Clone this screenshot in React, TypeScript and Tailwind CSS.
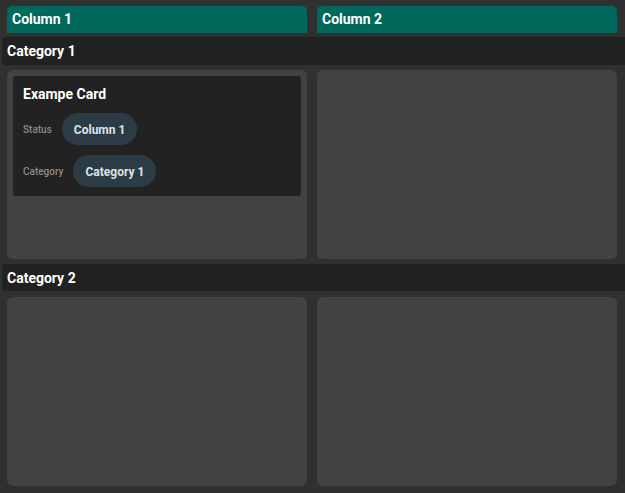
export default function App() {
    const columns = ["Column 1", "Column 2"];

    return (
        <div className="min-h-screen bg-[#303030] pt-[6px] font-['Roboto',sans-serif]">
            {/* Column headers */}
            <div className="flex gap-[10px] pl-[7px]">
                {columns.map((c) => (
                    <div
                        key={c}
                        className="w-[300px] h-[27px] rounded-t-[5px] bg-[#00695c] pl-[5px] flex items-center text-[14px] font-bold text-white"
                    >
                        {c}
                    </div>
                ))}
            </div>

            {/* Category 1 */}
            <div className="mt-[4px] ml-[2px] h-[28px] rounded-l-[4px] bg-[#212121] pl-[5px] flex items-center text-[14px] font-bold text-white">
                Category 1
            </div>
            <div className="mt-[5px] flex gap-[10px] pl-[7px]">
                <div className="w-[300px] h-[189px] rounded-[6px] bg-[#424242] p-[6px]">
                    <div className="rounded-[3px] bg-[#222222] px-[10px] pt-[9px] pb-[9px]">
                        <div className="text-[14px] font-bold text-white leading-[18px]">Exampe Card</div>
                        <div className="mt-[10px] flex items-center gap-[10px]">
                            <span className="text-[10px] font-medium text-[#8a8a8a]">Status</span>
                            <span className="h-[32px] rounded-full bg-[#2c3c46] px-[12px] flex items-center pt-[1px] text-[12px] font-bold text-[#dfe3e6]">
                                Column 1
                            </span>
                        </div>
                        <div className="mt-[10px] flex items-center gap-[10px]">
                            <span className="text-[10px] font-medium text-[#8a8a8a]">Category</span>
                            <span className="h-[32px] rounded-full bg-[#2c3c46] px-[12px] flex items-center pt-[1px] text-[12px] font-bold text-[#dfe3e6]">
                                Category 1
                            </span>
                        </div>
                    </div>
                </div>
                <div className="w-[300px] h-[189px] rounded-[6px] bg-[#424242]" />
            </div>

            {/* Category 2 */}
            <div className="mt-[5px] ml-[2px] h-[27px] rounded-l-[4px] bg-[#212121] pl-[5px] pt-[1px] flex items-center text-[14px] font-bold text-white">
                Category 2
            </div>
            <div className="mt-[6px] flex gap-[10px] pl-[7px]">
                <div className="w-[300px] h-[189px] rounded-[6px] bg-[#424242]" />
                <div className="w-[300px] h-[189px] rounded-[6px] bg-[#424242]" />
            </div>
        </div>
    );
}
